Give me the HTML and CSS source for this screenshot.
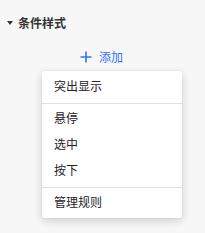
FILE: index.html
```html
<!DOCTYPE html>
<html lang="zh-CN">
<head>
  <meta charset="UTF-8" />
  <title>条件样式</title>
  <link rel="stylesheet" href="styles.css">
</head>
<body>
  <div class="panel">
    <div class="panel__header">
      <span class="caret"></span>
      <span class="panel__title">条件样式</span>
    </div>

    <div class="add-wrap">
      <button class="add-btn">
        <svg class="add-btn__icon" viewBox="0 0 12 12" width="12" height="12">
          <path d="M6 0.5V11.5M0.5 6H11.5" stroke="currentColor" stroke-width="1.6" fill="none" />
        </svg>
        <span>添加</span>
      </button>

      <!-- dropdown opened under the add button -->
      <ul class="menu">
        <li class="menu__item">突出显示</li>
        <li class="menu__divider"></li>
        <li class="menu__item">悬停</li>
        <li class="menu__item">选中</li>
        <li class="menu__item">按下</li>
        <li class="menu__divider"></li>
        <li class="menu__item">管理规则</li>
      </ul>
    </div>
  </div>
</body>
</html>
```

FILE: styles.css
```css
body {
  margin: 0;
  background: #f7f7f8;
  font-family: "Noto Sans CJK SC", "Noto Sans", sans-serif;
  color: #1f2329;
}

.panel {
  width: 205px;
  height: 233px;
}

.panel__header {
  display: flex;
  align-items: center;
  height: 20px;
  padding: 13px 0 0 7px;
}

.caret {
  width: 0;
  height: 0;
  border-left: 3.5px solid transparent;
  border-right: 3.5px solid transparent;
  border-top: 4px solid #333;
  margin-right: 5px;
}

.panel__title {
  font-size: 12px;
  font-weight: bold;
  line-height: 20px;
  color: #333;
}

.add-wrap {
  position: relative;
  display: flex;
  justify-content: center;
  padding: 15px 2px 0 0;
}

.add-btn {
  display: flex;
  align-items: center;
  border: 0;
  background: none;
  padding: 0;
  color: #3370ff;
  font-family: inherit;
  font-size: 12px;
  line-height: 18px;
}

.add-btn__icon {
  margin-right: 7px;
}

.menu {
  position: absolute;
  top: 38px;
  left: 42px;
  width: 140px;
  margin: 0;
  padding: 2px 0 3px;
  list-style: none;
  background: #fff;
  border-radius: 3px;
  box-shadow: 0 3px 9px rgba(0, 0, 0, 0.16), 0 0 2px rgba(0, 0, 0, 0.08);
}

.menu__item {
  height: 26px;
  line-height: 26px;
  padding-left: 12px;
  font-size: 12px;
  color: #1f2329;
}

.menu__divider {
  height: 1px;
  margin: 4px 0 1px;
  background: #dee0e3;
}
```
